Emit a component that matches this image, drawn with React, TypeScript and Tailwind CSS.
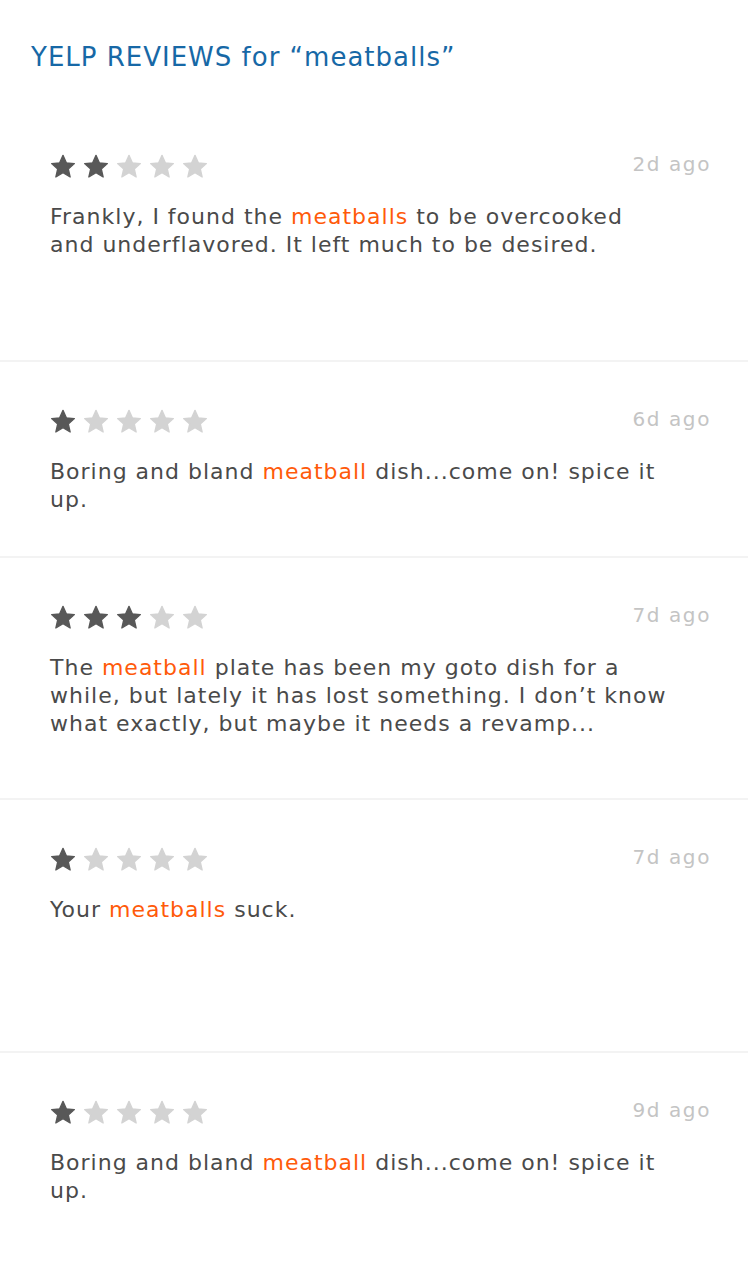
const reviews = [
  { stars: 2, ago: "2d ago", before: "Frankly, I found the ", word: "meatballs", after: " to be overcooked and underflavored. It left much to be desired.", h: "h-[253px]" },
  { stars: 1, ago: "6d ago", before: "Boring and bland ", word: "meatball", after: " dish...come on! spice it up.", h: "h-[194px]" },
  { stars: 3, ago: "7d ago", before: "The ", word: "meatball", after: " plate has been my goto dish for a while, but lately it has lost something. I don’t know what exactly, but maybe it needs a revamp...", h: "h-[240px]" },
  { stars: 1, ago: "7d ago", before: "Your ", word: "meatballs", after: " suck.", h: "h-[251px]" },
  { stars: 1, ago: "9d ago", before: "Boring and bland ", word: "meatball", after: " dish...come on! spice it up.", h: "h-[223px]" },
];

function Star({ on }: { on: boolean }) {
  return (
    <svg width="26" height="25" viewBox="0 0 24 23" className={on ? "text-[#585858]" : "text-[#d3d3d3]"}>
      <path
        fill="currentColor"
        stroke="currentColor"
        strokeWidth="1.2"
        strokeLinejoin="round"
        d="M12 1.2l3.1 6.9 7.4.7-5.6 5 1.7 7.4L12 17.3l-6.6 3.9 1.7-7.4-5.6-5 7.4-.7z"
      />
    </svg>
  );
}

export default function App() {
  return (
    <div className="min-h-[1276px] w-[748px] overflow-hidden bg-white font-['DejaVu_Sans',sans-serif]">
      {/* Header */}
      <div className="h-[107px] px-[31px] pt-[38px]">
        <h1 className="text-[26px] leading-[38px] tracking-[1px] text-[#1768a6]">YELP REVIEWS for “meatballs”</h1>
      </div>

      {reviews.map((r, i) => (
        <div key={i}>
          {i > 0 && <div className="h-[2px] bg-[#f3f3f3]" />}
          <div className={`${r.h} pl-[50px] pr-[37px] pt-[47px]`}>
            <div className="flex h-[24px] items-center justify-between">
              <div className="flex gap-[7px]">
                {[0, 1, 2, 3, 4].map((s) => (
                  <Star key={s} on={s < r.stars} />
                ))}
              </div>
              <span className="mb-[4px] text-[20px] leading-[24px] tracking-[1.6px] text-[#c4c4c4]">{r.ago}</span>
            </div>
            <p className="mt-[25px] max-w-[625px] text-[22px] leading-[28px] tracking-[1px] text-[#4a4a4a]">
              {r.before}
              <span className="text-[#ff5a0a]">{r.word}</span>
              {r.after}
            </p>
          </div>
        </div>
      ))}
    </div>
  );
}
